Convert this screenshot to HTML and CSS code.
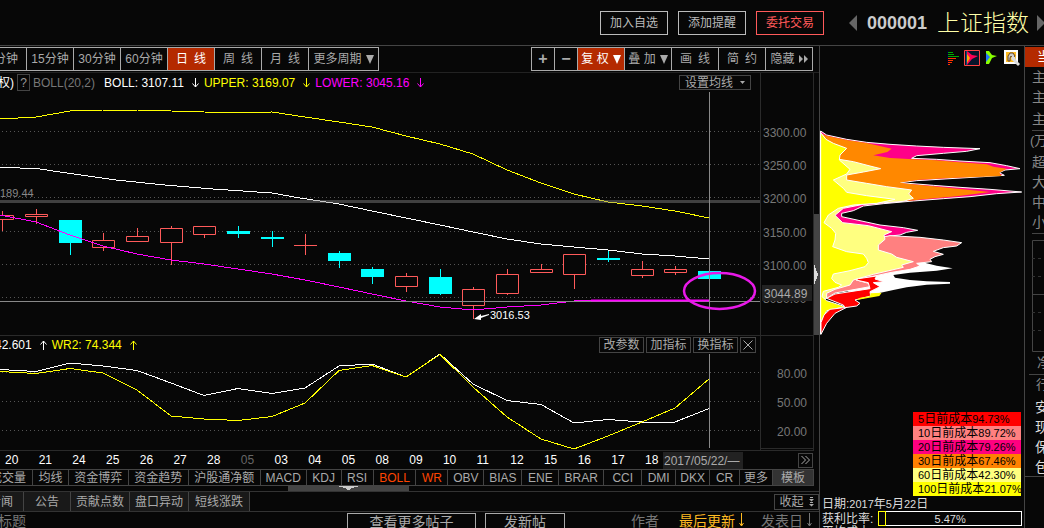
FILE: index.html
```html
<!DOCTYPE html>
<html lang="zh-CN">
<head>
<meta charset="utf-8">
<title>上证指数 000001</title>
<link rel="stylesheet" href="styles.css">
</head>
<body>
<svg class="defs" aria-hidden="true">
  <symbol id="down" viewBox="0 0 7 10"><path d="M3.5 0v9M.5 5.5l3 3.5 3-3.5" fill="none" stroke="currentColor"/></symbol>
  <symbol id="up" viewBox="0 0 7 10"><path d="M3.5 10V1M.5 4.500l3-3.500 3 3.500" fill="none" stroke="currentColor"/></symbol>
  <symbol id="tri" viewBox="0 0 8 9"><path d="M0 0h8L4 9z" fill="currentColor"/></symbol>
</svg>
<header class="top">
  <button class="action">加入自选</button>
  <button class="action">添加提醒</button>
  <button class="action trade">委托交易</button>
  <svg class="prev" viewBox="0 0 8 16"><path d="M8 0v16L0 8z"/></svg>
  <strong class="code">000001</strong>
  <h1 class="name">上证指数</h1>
  <svg class="next" viewBox="0 0 7 16"><path d="M0 0v16l8-8z"/></svg>
</header>

<main class="main">
  <section class="left">
    <nav class="toolbar">
      <div class="group periods">
        <button class="cut">5分钟</button><button>15分钟</button><button>30分钟</button><button>60分钟</button><button class="on">日&ensp;线</button><button>周&ensp;线</button><button>月&ensp;线</button><button class="more">更多周期<svg class="tri"><use href="#tri"/></svg></button>
      </div>
      <div class="group tools">
        <button class="sign">+</button><button class="sign">−</button><button class="on">复 权<svg class="tri"><use href="#tri"/></svg></button><button>叠 加<svg class="tri"><use href="#tri"/></svg></button><button>画&ensp;线</button><button>简&ensp;约</button><button>隐藏<svg class="ff" viewBox="0 0 9 8"><path d="M0 0l4 4-4 4zM5 0l4 4-4 4z" fill="currentColor"/></svg></button>
      </div>
    </nav>

    <div class="charts">
      <div class="panels">
        <div class="info">
          <div class="readout">
            <span class="cutword">权)</span>
            <button class="help">?</button>
            <span class="dim">BOLL(20,2)</span>
            <span class="white">BOLL: 3107.11</span><svg class="arrow white"><use href="#down"/></svg>
            <span class="yellow">UPPER: 3169.07</span><svg class="arrow yellow"><use href="#down"/></svg>
            <span class="magenta">LOWER: 3045.16</span><svg class="arrow magenta"><use href="#down"/></svg>
            <button class="ma">设置均线<svg class="caret" viewBox="0 0 5 3"><path d="M0 0h5L2.500 3z" fill="currentColor"/></svg></button>
          </div>
          <div class="axishead"></div>
        </div>

        <svg class="chart" viewBox="0 92 814 243">
          <g class="grid"><path d="M2 131.500H762M2 164.500H762M2 197.500H762M2 231.500H762M2 264.500H762M2 297.500H762"/></g>
          <path class="frame" d="M760.500 92V335M813.500 92V335"/>
          <text class="low" x="0" y="197">189.44</text>
          <g class="rise">
            <path d="M2.500 211V231M36.500 209V224M103.500 233V251M137.500 228V241M171.500 226V265M204.500 226V238M305.500 234V255M294 245.500h23M406.500 273V292M473.500 287V319M507.500 269V295M541.500 264V273M574.500 254V289M642.500 261V278M675.500 266V275"/>
            <path class="body" d="M-8.500 215.500h22v4h-22zM25.500 214.500h22v2h-22zM92.500 240.500h22v7h-22zM126.500 236.500h22v5h-22zM160.500 228.500h22v14h-22zM193.500 226.500h22v8h-22zM395.500 276.500h22v10h-22zM462.500 289.500h22v16h-22zM496.500 274.500h22v19h-22zM530.500 269.500h22v3h-22zM563.500 254.500h22v20h-22zM631.500 269.500h22v6h-22zM664.500 269.500h22v3h-22z"/>
          </g>
          <path class="fall" d="M59 220h23v23H59zM70 243h1v12h-1zM227 231h23v3h-23zM238 226h1v12h-1zM261 237h23v2h-23zM272 231h1v16h-1zM328 253h23v8h-23zM339 251h1v17h-1zM361 269h23v8h-23zM372 267h1v17h-1zM429 277h23v17h-23zM440 269h1v26h-1zM597 258h23v2h-23zM608 250h1v12h-1zM698 271h23v8h-23z"/>
          <polyline class="line lw" points="0,167 40,169 60,172 116,180 165,185 213,189 272,193 300,198 339,204 372,211 406,218 440,225 473,232 507,239 541,244 574,247 608,250 642,254 675,256 709,259"/>
          <polyline class="line ly" points="0,119 36,117 70,111 103,110 137,110 171,111 204,112 238,113 272,112 305,117 339,122 372,127 406,136 440,144 473,154 507,170 541,183 574,194 608,202 642,206 675,211 709,218"/>
          <polyline class="line lm" points="0,215 36,222 70,235 103,246 137,254 171,260 204,264 238,269 272,274 305,280 339,287 372,294 406,301 440,307 473,310 507,307 541,305 574,301 592,300"/>
          <path class="band" d="M0 200h760v3H0z"/>
          <path class="cross" d="M0 301.500H760M709.500 92V333"/>
          <path d="M591 300.500H709" stroke="#f0f" stroke-width="2"/>
          <path d="M474 319l7-5v2l8-2v1l-8 3v2z" fill="#fff"/>
          <text class="price" x="490" y="319">3016.53</text>
          <g class="scale">
            <text x="763" y="137">3300.00</text><text x="763" y="170">3250.00</text><text x="763" y="203">3200.00</text><text x="763" y="237">3150.00</text><text x="763" y="270">3100.00</text><text x="763" y="303">3050.00</text>
          </g>
          <path d="M762 285h50v16h-50z" fill="#222"/>
          <text class="now" x="764" y="298">3044.89</text>
          <ellipse cx="719.500" cy="291" rx="35.500" ry="18" fill="none" stroke="#e819e8" stroke-width="2.500"/>
        </svg>

        <div class="info wr">
          <div class="readout">
            <span class="white cutnum">42.601</span><svg class="arrow white"><use href="#up"/></svg>
            <span class="yellow">WR2: 74.344</span><svg class="arrow yellow"><use href="#up"/></svg>
            <div class="edit"><button>改参数</button><button>加指标</button><button>换指标</button><button class="close" aria-label="关闭"><svg viewBox="0 0 10 10"><path d="M.5.5l9 9M9.500.5l-9 9" stroke="currentColor"/></svg></button></div>
          </div>
          <div class="axishead"></div>
        </div>

        <svg class="chart" viewBox="0 353 814 97">
          <g class="grid"><path d="M2 372.500H762M2 401.500H762M2 430.500H762"/></g>
          <path class="frame" d="M760.500 353V450M813.500 353V450M761 448.500H813"/>
          <polyline class="line lw" points="0,369.500 36,371.500 70,363 103,366 137,370.500 171,383 204,395.500 238,388.500 272,393.500 305,388 339,366 372,364 406,377 440,354 473,384 507,400.500 541,404.500 574,423 608,419.500 642,422 675,422 709,408.500"/>
          <polyline class="line ly" points="0,371.500 36,373.500 70,368.500 103,373 137,390 171,416 204,419 238,420.500 272,416.500 305,403 339,370.500 372,365.500 406,377 440,354.500 473,387 507,417 541,439 574,449 608,436 642,422 675,408 709,379"/>
          <path class="cross" d="M709.500 354V448"/>
          <g class="scale"><text x="777" y="378">80.00</text><text x="777" y="407">50.00</text><text x="777" y="436">20.00</text></g>
        </svg>
      </div>
      <div class="splitter"><div class="thumb"><svg viewBox="0 0 5 19"><path d="M0 0h1v3h1v3h1v2h1v3h-1v3h-1v2h-1v3H0z" fill="#ddd"/></svg></div></div>
    </div>

    <div class="dates">
      <div class="days"><span>20</span><span>21</span><span>24</span><span>25</span><span>26</span><span>27</span><span>28</span><span class="month">05</span><span>03</span><span>04</span><span>05</span><span>08</span><span>09</span><span>10</span><span>11</span><span>12</span><span>15</span><span>16</span><span>17</span><span>18</span></div>
      <span class="today">2017/05/22/—</span>
      <button class="expand" aria-label="展开"><svg viewBox="0 0 9 8"><path d="M.5 0l4 4-4 4M4.500 0l4 4-4 4" fill="none" stroke="currentColor"/></svg></button>
    </div>

    <nav class="tabs"><button class="cut">成交量</button><button>均线</button><button>资金博弈</button><button>资金趋势</button><button>沪股通净额</button><button>MACD</button><button>KDJ</button><button>RSI</button><button class="hot">BOLL</button><button class="hot">WR</button><button>OBV</button><button>BIAS</button><button>ENE</button><button>BRAR</button><button>CCI</button><button>DMI</button><button>DKX</button><button>CR</button><button>更多</button><button class="tpl">模板</button></nav>

    <div class="strip"><div class="bar"><svg viewBox="0 0 19 4"><path d="M0 0h19v1h-4v1h-3v1h-1v1h-3V3H7V2H4V1H0z" fill="#ccc"/></svg></div></div>

    <div class="news">
      <nav class="newstabs"><button class="cut">新闻</button><button>公告</button><button>贡献点数</button><button>盘口异动</button><button>短线涨跌</button></nav>
      <button class="fold">收起<svg viewBox="0 0 5 10"><path d="M1 0h3v1H1zM0 2h5L2.500 4.500zM1 5h3v1H1zM0 7h5L2.500 9.500z" fill="currentColor"/></svg></button>
    </div>

    <div class="posts">
      <span class="subject">标题</span>
      <button class="wide">查看更多帖子</button>
      <button>发新帖</button>
      <span class="author">作者</span>
      <span class="sorted">最后更新<svg class="long" viewBox="0 0 5 14"><path d="M2.500 0v13M.5 10l2 3 2-3" fill="none" stroke="currentColor"/></svg></span>
      <span class="posted">发表日<svg class="long" viewBox="0 0 5 14"><path d="M2.500 0v13M.5 10l2 3 2-3" fill="none" stroke="currentColor"/></svg></span>
    </div>
  </section>

  <section class="chips">
    <div class="icons">
      <svg class="i1" viewBox="0 0 12 16" shape-rendering="crispEdges"><path d="M0 1h1v14H0z" fill="#003"/><path d="M1 2h5v1H1zM1 4h6v1H1zM1 6h11v1H1z" fill="#0a0"/><path d="M1 8h8v1H1zM1 10h5v1H1zM1 12h4v1H1zM1 14h2v1H1z" fill="#f30"/></svg>
      <svg class="i2" viewBox="0 0 16 16"><path d="M.5.5h15v15H.5z" fill="#07152b" stroke="#f44"/><path d="M3 1l5 4 6 1-6 3-5 6z" fill="#f05"/><path d="M3 4l3 4-3 5z" fill="#fa0"/><path d="M2 1h1v14H2z" fill="#057"/></svg>
      <svg class="i3" viewBox="0 0 12 15"><path d="M1 1h3l3 4 5 1-5 2-3 6H1z" fill="#8f0"/><path d="M1 3l4 4-4 5z" fill="#27f"/></svg>
      <svg class="i4" viewBox="0 0 16 16"><path d="M1 1h12v12H1z" fill="#fb2" stroke="#fff" stroke-width="2"/><path d="M4 11V6l2-3h3l2 3-2 2-2-2-1 2v3z" fill="#ccc" stroke="#642"/><path d="M8 6l3 1 1 3 4 4-2 2-5-5-2-2z" fill="#ddd"/></svg>
    </div>
    <svg class="spread" viewBox="30 30 612 615">
      <path fill="#f08" stroke="#fff" stroke-width="3" d="M32 33L50 45 110 58 170 67 240 73 320 78 400 82 510 86 470 94 400 100 320 107 305 115 380 118 450 123 540 128 590 137 630 146 585 150 568 158 583 166 520 170 420 176 320 182 270 188 370 196 450 202 540 208 635 216 560 221 480 230 400 236 310 243 220 251 160 258 130 272 95 280 95 290 150 302 210 315 280 323 323 331 290 337 270 345 240 348 32 400z"/>
      <path fill="#f80" d="M32 40L50 47 110 60 170 69 245 86 232 96 190 106 240 114 310 118 380 121 450 127 530 133 550 140 590 146 568 158 575 168 420 174 320 180 268 188 300 192 370 199 450 207 540 216 440 229 340 238 300 242 32 250z"/>
      <path fill="#fff" d="M220 430L335 426 380 437 428 445 380 452 300 458 250 465 255 473 300 480 350 484 420 486 420 491 350 494 290 502 250 510 205 520 140 538 100 500z"/>
      <path fill="#ff8080" stroke="#fff" stroke-width="3" d="M215 352L240 347 330 352 400 360 455 368 440 378 400 383 370 394 400 403 375 410 360 418 365 425 320 430 330 438 300 448 240 458 185 470 140 480 175 490 180 500 120 511 75 519 50 535 40 525 60 510 120 490z"/>
      <path fill="#ffff80" stroke="#fff" stroke-width="3" d="M32 38L88 118 130 125 180 138 212 146 160 156 110 165 110 180 170 190 230 200 305 210 296 222 310 235 280 244 160 253 100 265 75 286 98 308 175 317 245 335 222 345 225 358 205 375 205 390 245 402 260 412 310 425 275 435 280 442 190 463 130 480 120 495 75 508 50 520 50 535 32 545z"/>
      <path fill="#ff0" stroke="#fff" stroke-width="3" d="M32 38L48 58 70 70 110 85 90 105 88 120 120 148 110 162 70 180 100 205 110 217 170 227 255 238 200 250 130 255 85 265 55 285 42 308 65 325 77 340 75 360 68 380 110 395 160 402 170 415 175 428 165 440 120 452 70 462 65 475 75 487 95 495 85 502 40 514 36 530 50 542 105 560 50 572 36 600 32 610z"/>
      <path fill="#f00" stroke="#fff" stroke-width="3" d="M145 476L200 468 195 477 222 485 190 488 210 500 180 515 182 528 135 540 150 550 140 558 105 563 100 555 50 535 75 522 180 506 175 488 138 480z"/>
      <path fill="#f00" stroke="#fff" stroke-width="3" d="M110 562L60 568 42 585 33 608 33 643 50 610 75 580z"/>
      <path fill="#ff0" d="M182 520L215 518 208 528 140 540 150 533 180 529z"/>
      <path stroke="#fff" stroke-width="3" d="M31.500 33V643"/>
    </svg>
    <ul class="legend">
      <li class="d5"><b>5</b>日前成本<b>94.73%</b></li>
      <li class="d10"><b>10</b>日前成本<b>89.72%</b></li>
      <li class="d20"><b>20</b>日前成本<b>79.26%</b></li>
      <li class="d30"><b>30</b>日前成本<b>67.46%</b></li>
      <li class="d60"><b>60</b>日前成本<b>42.30%</b></li>
      <li class="d100"><b>100</b>日前成本<b>21.07%</b></li>
    </ul>
    <div class="day">日期:<b>2017</b>年<b>5</b>月<b>22</b>日</div>
    <div class="profit"><span>获利比率:</span><div class="meter"><i></i><b>5.47%</b></div></div>
    <div class="day">平均成本:</div>
  </section>

  <aside class="side">
    <div class="sidehead">当日</div>
    <p class="flow first">主力</p><p class="flow">主力</p><p class="flow third">主力</p>
    <p class="unit">(万元)</p>
    <p class="flow">超大</p><p class="flow">大单</p><p class="flow">中单</p><p class="flow">小单</p>
    <div class="box"><svg viewBox="0 0 12 112"><path d="M12 .5H.5v111H12M0 54.500h12" fill="none" stroke="#444"/><path d="M0 18.500h12M0 36.500h12M0 72.500h12M0 90.500h12" stroke="#333" stroke-dasharray="3 3"/></svg></div>
    <p class="net">净额</p>
    <p class="trade-head">行业</p>
    <p class="stock">安信</p><p class="stock">现代</p><p class="stock">保利</p><p class="stock last">包钢</p>
  </aside>
</main>
</body>
</html>
```

FILE: styles.css
```css
* { box-sizing: border-box; }
body {
  margin: 0;
  min-height: 100vh;
  background: #070707;
  color: #aaa;
  font: 12px/14px "Liberation Sans", "Noto Sans CJK SC", sans-serif;
  overflow: hidden;
}
button {
  margin: 0;
  padding: 0;
  border: 1px solid #444;
  border-radius: 0;
  background: none;
  color: inherit;
  font: inherit;
  white-space: nowrap;
  display: flex;
  align-items: center;
  justify-content: center;
}
p, ul, h1 { margin: 0; padding: 0; }
svg { display: block; flex: none; }
b { font-weight: normal; font-size: 11px; }
.defs { width: 0; height: 0; position: absolute; }

/* header */
.top {
  height: 46px;
  display: flex;
  align-items: center;
  justify-content: flex-end;
  border-bottom: 1px solid #444;
}
.action { width: 68px; height: 24px; margin-right: 10px; border-color: #bbb; color: #bbb; }
.trade { border-color: #ff5a5a; color: #ff5a5a; }
.prev { width: 8px; height: 16px; margin-left: 15px; fill: #666; }
.next { width: 7px; height: 16px; margin-left: 8px; fill: #666; }
.code { margin-left: 10px; font-size: 18px; line-height: 22px; color: #ccc; }
.name { margin-left: 10px; font-size: 23px; line-height: 24px; font-weight: 300; color: #ffffa8; }

.main { display: grid; grid-template-columns: 1fr 204px 20px; height: calc(100vh - 46px); }
.left { border-right: 1px solid #444; min-width: 0; }

/* toolbar */
.toolbar {
  display: flex;
  justify-content: space-between;
  padding: 1px 6px 1px 0;
  border-bottom: 1px solid #222;
}
.group { display: flex; }
.group button { width: 48px; height: 24px; margin-left: -1px; border-color: #aaa; color: #aaa; }
.group .cut { width: 28px; justify-content: flex-end; padding-right: 8px; overflow: hidden; }
.group .more { width: 71px; }
.group .sign { width: 24px; font-size: 16px; font-weight: bold; }
.group .on { background: #b42a00; color: #fff; }
.tri { width: 8px; height: 9px; margin-left: 4px; }
.ff { width: 9px; height: 8px; margin-left: 4px; }

/* chart panels */
.charts { display: flex; }
.panels { flex: 1; min-width: 0; }
.info { display: flex; height: 19px; }
.readout { flex: 1; display: flex; align-items: center; border-right: 1px solid #2a2a2a; padding-right: 9px; }
.axishead { width: 53px; border-right: 1px solid #2a2a2a; }
.cutword { margin-left: -2px; color: #fff; }
.help { width: 13px; height: 17px; margin: 0 3px; color: #999; }
.dim { color: #777; margin-right: 9px; }
.white { color: #fff; }
.yellow { color: #ff0; }
.magenta { color: #f0f; }
.arrow { width: 7px; height: 10px; margin: 0 5px 0 8px; }
.ma { width: 72px; height: 15px; margin-left: auto; }
.caret { width: 5px; height: 3px; margin-left: 7px; }
.chart { width: 100%; height: auto; }
.chart text { font-size: 12px; }
.grid path { stroke: #555; stroke-dasharray: 1 3; }
.frame { stroke: #2a2a2a; fill: none; }
.chart .low { fill: #888; font-size: 11px; }
.chart .price { fill: #fff; font-size: 11px; }
.rise path { stroke: #ff5a5a; }
.rise .body { fill: #070707; }
.fall { fill: #0ff; }
.line { fill: none; shape-rendering: crispEdges; }
.lw { stroke: #fff; }
.ly { stroke: #ff0; }
.lm { stroke: #f0f; }
.band { fill: #888; fill-opacity: .45; }
.cross { stroke: #888; }
.scale { fill: #777; }
.now { fill: #aaa; }
.wr { height: 18px; border-top: 1px solid #2a2a2a; }
.cutnum { margin-left: -5px; }
.edit { display: flex; gap: 2px; margin-left: auto; margin-right: -5px; }
.edit button { width: 45px; height: 16px; }
.edit .close { width: 16px; }
.close svg { width: 10px; height: 10px; }
.splitter { width: 5px; }
.thumb { height: 121px; margin-top: 141px; padding-top: 51px; background: #444; }
.thumb svg { width: 5px; height: 19px; }

/* date axis */
.dates { display: flex; height: 19px; margin-right: 5px; border-top: 1px solid #2a2a2a; align-items: center; }
.days {
  flex: 1;
  display: grid;
  grid-template-columns: repeat(19, 1fr) 18px;
  padding-left: 5px;
  color: #fff;
}
.month { color: #666; }
.today { width: 80px; height: 17px; padding: 2px 1px 0; background: #222; color: #aaa; white-space: nowrap; }
.expand { width: 15px; height: 15px; margin: 0 1px 0 55px; }
.expand svg { width: 9px; height: 8px; }

/* indicator tabs */
.tabs {
  display: grid;
  grid-template-columns: 33fr 36fr 60fr 60fr 72fr 46fr 35fr 32fr 43fr 32fr 36fr 38fr 37fr 45fr 38fr 34fr 34fr 30fr 33fr 41fr;
  height: 17px;
  margin-right: 5px;
  border: 1px solid #444;
  border-width: 1px 0;
}
.tabs button { border-width: 0 1px 0 0; min-width: 0; }
.tabs .cut { justify-content: flex-end; padding-right: 6px; overflow: hidden; }
.tabs .hot { color: #ff4500; }
.tabs .tpl { background: #333; }

.strip { height: 5px; }
.bar { width: 121px; height: 5px; margin-left: 288px; padding-left: 51px; background: #444; }
.bar svg { width: 19px; height: 4px; }

/* news */
.news { display: flex; justify-content: space-between; align-items: center; height: 21px; border: 1px solid #333; border-width: 1px 0; }
.newstabs { display: flex; height: 19px; }
.newstabs button { width: 59px; border-width: 0 1px 0 0; background: #191919; }
.newstabs button:nth-child(2) { width: 47px; }
.newstabs button:last-child { width: 61px; }
.newstabs .cut { width: 24px; justify-content: flex-end; padding-right: 10px; overflow: hidden; }
.fold { width: 45px; height: 16px; }
.fold svg { width: 5px; height: 10px; margin-left: 5px; }

.posts { display: flex; align-items: flex-start; font-size: 14px; line-height: 16px; padding-top: 1px; height: 16px; color: #777; }
.subject { flex: 1; margin-left: -2px; }
.posts button { width: 80px; height: 18px; border-color: #aaa; color: #aaa; margin-right: 66px; }
.posts .wide { width: 129px; margin-right: 9px; }
.author { width: 48px; }
.sorted, .posted { display: flex; white-space: nowrap; }
.sorted { width: 82px; color: #fb2; }
.posted { width: 58px; }
.long { width: 5px; height: 14px; margin-left: 4px; }

/* cost distribution */
.chips { display: flex; flex-direction: column; min-width: 0; overflow: hidden; }
.icons { display: flex; flex: none; height: 84px; padding: 4px 4px 0 0; justify-content: flex-end; gap: 5px; }
.i1 { width: 12px; height: 16px; }
.i2 { width: 16px; height: 16px; }
.i3 { width: 12px; height: 15px; }
.i4 { width: 16px; height: 16px; margin-left: 2px; }
.spread { width: 100%; height: auto; }
.legend { width: 108px; flex: none; margin: 77px 3px 2px auto; list-style: none; color: #000; }
.legend li { height: 14px; padding-left: 5px; white-space: nowrap; overflow: hidden; }
.d5 { background: #f00; }
.d10 { background: #ff8080; }
.d20 { background: #ff0080; }
.d30 { background: #ff8000; }
.d60 { background: #ffff80; }
.d100 { background: #ff0; }
.day { padding-left: 2px; height: 13px; line-height: 13px; color: #ddd; flex: none; }
.profit { display: flex; align-items: center; padding: 0 2px; height: 15px; color: #ddd; flex: none; }
.meter { flex: 1; display: flex; height: 15px; margin-left: 5px; border: 1px solid #fff; justify-content: center; align-items: center; position: relative; }
.meter i { position: absolute; left: -1px; top: -1px; bottom: -1px; width: 8px; border: 1px solid #ff0; }
.profit span { white-space: nowrap; }

/* money flow */
.side { border-left: 1px solid #444; overflow: hidden; font-size: 14px; line-height: 20px; white-space: nowrap; color: #888; }
.sidehead { height: 20px; margin-top: 1px; padding-left: 12px; background: #b42a00; color: #fff; font-size: 13px; }
.flow { padding-left: 7px; height: 20px; }
.flow.third { height: 24px; padding-top: 2px; margin-left: 7px; padding-left: 0; border-bottom: 1px solid #444; }
.unit { padding-left: 5px; height: 21px; font-size: 13px; }
.box { margin: 1px 0 0 7px; padding-top: 6px; border-top: 1px solid #444; }
.box svg { width: 12px; height: 112px; }
.net { margin-left: 4px; padding-left: 8px; height: 23px; border-bottom: 1px solid #444; font-size: 13px; line-height: 22px; }
.trade-head { padding-left: 11px; height: 22px; font-size: 13px; }
.stock { padding-left: 10px; height: 20px; color: #ddd; }
.stock.last { border-bottom: 1px solid #444; }
```
